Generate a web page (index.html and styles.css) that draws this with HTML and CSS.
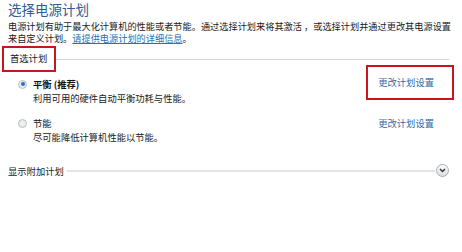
FILE: index.html
```html
<!DOCTYPE html>
<html lang="zh-CN">
<head>
<meta charset="utf-8">
<link rel="stylesheet" href="styles.css">
</head>
<body>
<div class="page">
  <h1 class="title">选择电源计划</h1>
  <p class="desc">电源计划有助于最大化计算机的性能或者节能。通过选择计划来将其激活 ，或选择计划并通过更改其电源设置来自定义计划。<a class="link" href="#">请提供电源计划的详细信息</a>。</p>

  <div class="section-head">
    <span class="mark mark-head">首选计划</span>
    <span class="rule"></span>
  </div>

  <div class="plan plan-first">
    <div class="plan-main">
      <div class="plan-title"><span class="radio radio-on"></span><span class="name bold">平衡 (推荐)</span></div>
      <div class="plan-desc">利用可用的硬件自动平衡功耗与性能。</div>
    </div>
    <span class="mark mark-link"><a class="change" href="#">更改计划设置</a></span>
  </div>

  <div class="plan plan-second">
    <div class="plan-main">
      <div class="plan-title"><span class="radio"></span><span class="name">节能</span></div>
      <div class="plan-desc">尽可能降低计算机性能以节能。</div>
    </div>
    <a class="change" href="#">更改计划设置</a>
  </div>

  <div class="more">
    <span class="more-label">显示附加计划</span>
    <span class="rule rule-more"></span>
    <span class="chev"><svg width="7" height="5" viewBox="0 0 7 5"><path d="M1 1 L3.5 3.5 L6 1" fill="none" stroke="#333" stroke-width="1.4"/></svg></span>
  </div>
</div>
</body>
</html>
```
FILE: styles.css
```css
* { box-sizing: border-box; }
html, body { margin: 0; padding: 0; background: #fff; }
body {
  font-family: "Noto Sans CJK SC", "Noto Sans", sans-serif;
  font-size: 9.3px;
  color: #1a1a1a;
  width: 462px;
  height: 252px;
  overflow: hidden;
}
.page { padding: 1px 13px 0 8px; }
.title {
  margin: 0;
  font-size: 13.5px;
  font-weight: normal;
  line-height: 16px;
  color: #2f5a94;
}
.desc {
  margin: 3px -10px 0 0;
  font-size: 9.2px;
  line-height: 12px;
  color: #1a1a1a;
}
.link { color: #2a6fb5; text-decoration: underline; }
.section-head {
  display: flex;
  align-items: center;
  margin: 2px 0 0 -6px;
}
.mark { border: 2px solid #c8161d; }
.mark-head {
  padding: 0 7px 0 6px;
  height: 26px;
  line-height: 21px;
  color: #222;
}
.rule { flex: 1; height: 1px; background: #cfd4d9; }
.plan { display: flex; justify-content: space-between; align-items: flex-start; }
.plan-first { margin-top: 6px; }
.plan-second { margin-top: 13px; }
.plan-main { padding-left: 10px; }
.plan-title { display: flex; align-items: center; height: 12px; }
.radio {
  width: 9px; height: 9px; border-radius: 50%;
  border: 1px solid #b8bcc2;
  background: radial-gradient(circle, #f4f4f4 0, #e2e4e6 100%);
  margin-right: 6px;
  display: inline-flex; align-items: center; justify-content: center;
}
.radio-on::after {
  content: ""; width: 4px; height: 4px; border-radius: 50%;
  background: #2a6fc0;
}
.name { line-height: 12px; color: #111; }
.bold { font-weight: bold; }
.plan-desc { padding-left: 15px; margin-top: 2px; line-height: 12px; color: #222; }
.change { color: #2f6aa8; text-decoration: none; line-height: 12px; }
.plan-second .change { margin-right: 15px; }
.mark-link {
  padding: 9px 18px 10px 10px;
  margin: -13px -5px 0 0;
  line-height: 12px;
  display: inline-block;
}
.more {
  display: flex; align-items: center;
  margin-top: 21px;
}
.more-label { line-height: 12px; color: #222; margin-right: 3px; }
.rule-more { height: 2px; background: #e2e4e6; }
.chev {
  width: 13px; height: 13px; border-radius: 50%;
  border: 1px solid #a9adb2;
  background: linear-gradient(#fdfdfd, #dcdee0);
  display: inline-flex; align-items: center; justify-content: center;
  margin-left: 1px;
}
```
